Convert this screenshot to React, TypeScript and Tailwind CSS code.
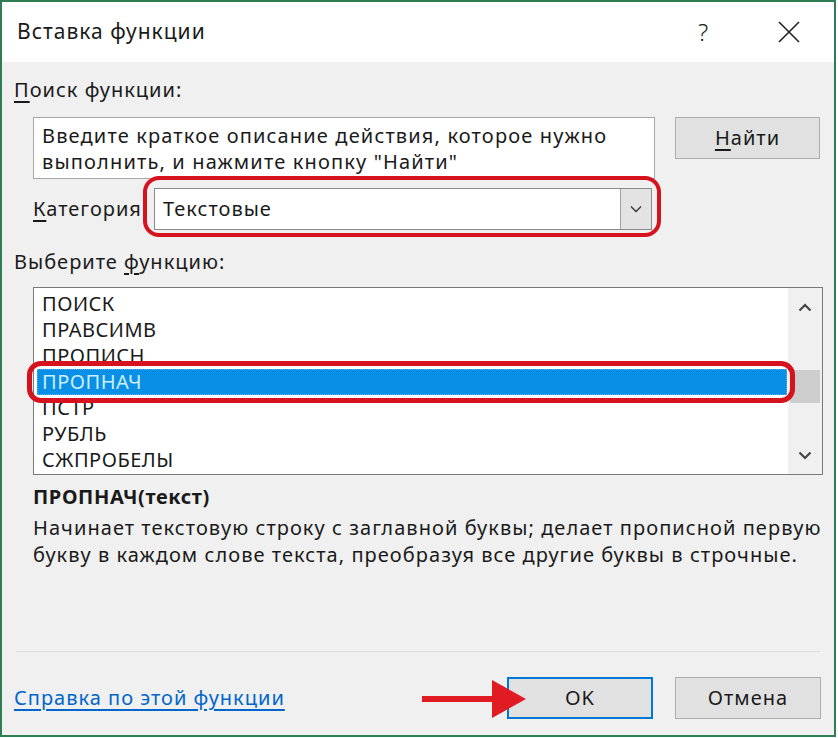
import React from "react";

const font = { fontFamily: '"Noto Sans", "Open Sans", Arial, sans-serif' };

const items = ["ПОИСК", "ПРАВСИМВ", "ПРОПИСН", "ПРОПНАЧ", "ПСТР", "РУБЛЬ", "СЖПРОБЕЛЫ"];

export default function App() {
  return (
    <div className="w-[838px] h-[738px] bg-white text-[#1a1a1a]" style={font}>
      <div className="relative w-[836px] h-[737px] border-2 border-[#2f7d55] flex flex-col">
        {/* Title bar */}
        <div className="h-[60px] bg-white flex items-center pl-[15px] shrink-0">
          <div className="text-[21px] tracking-[1px] flex-1">Вставка функции</div>
          <div className="text-[24px] font-light w-[30px] text-center mr-[60px] text-[#222]">?</div>
          <svg width="22" height="22" viewBox="0 0 22 22" className="mr-[34px]">
            <path d="M1 1 L21 21 M21 1 L1 21" stroke="#222" strokeWidth="1.6" />
          </svg>
        </div>
        {/* Body */}
        <div className="flex-1 bg-[#f0f0f0] flex flex-col pl-[12px] pr-[12px] text-[20px] tracking-[1px]">
          <div className="mt-[15px] h-[26px] leading-[26px]">
            <span className="underline underline-offset-[4px]">П</span>оиск функции:
          </div>
          <div className="mt-[14px] flex ml-[19px]">
            <div className="w-[622px] h-[62px] bg-white border border-[#a8a8a8] pl-[8px] pt-[5px] leading-[26px] tracking-[1.15px]">
              Введите краткое описание действия, которое нужно
              <br />
              выполнить, и нажмите кнопку "Найти"
            </div>
            <div className="ml-[20px] w-[145px] h-[42px] bg-[#e1e1e1] border border-[#adadad] flex items-center justify-center">
              <span>
                <span className="underline underline-offset-[4px]">Н</span>айти
              </span>
            </div>
          </div>
          <div className="mt-[9px] flex items-center ml-[19px] h-[42px]">
            <div className="w-[121px]">
              <span className="underline underline-offset-[4px]">К</span>атегория
            </div>
            <div className="w-[498px] h-[42px] bg-white border border-[#8a8a8a] flex items-center">
              <div className="flex-1 pl-[8px]">Текстовые</div>
              <div className="w-[31px] h-full bg-[#e3e3e3] border-l border-[#a0a0a0] flex items-center justify-center">
                <svg width="12" height="8" viewBox="0 0 12 8">
                  <path d="M1 1.5 L6 6.5 L11 1.5" fill="none" stroke="#333" strokeWidth="1.3" />
                </svg>
              </div>
            </div>
          </div>
          <div className="mt-[19px] h-[26px] leading-[26px]">
            Выберите <span className="underline underline-offset-[4px]">ф</span>ункцию:
          </div>
          <div className="mt-[12px] ml-[19px] w-[790px] h-[188px] bg-white border border-[#7a7a7a] flex">
            <div className="flex-1 pt-[3px] pl-[3px] pr-[1px] tracking-[0.5px]">
              {items.map((it) => (
                <div
                  key={it}
                  className={
                    it === "ПРОПНАЧ"
                      ? "h-[26px] leading-[24px] pl-[4px] bg-[#0a8fe6] text-[#cdeeff] border border-dotted border-[#5fb0ee]"
                      : "h-[26px] leading-[26px] pl-[5px]"
                  }
                >
                  {it}
                </div>
              ))}
            </div>
            <div className="w-[34px] bg-[#f0f0f0] flex flex-col items-center">
              <div className="h-[38px] w-full flex items-center justify-center">
                <svg width="14" height="9" viewBox="0 0 14 9">
                  <path d="M1.5 7.5 L7 2 L12.5 7.5" fill="none" stroke="#444" strokeWidth="2.2" />
                </svg>
              </div>
              <div className="mt-[44px] h-[33px] w-[30px] bg-[#cdcdcd]" />
              <div className="flex-1" />
              <div className="h-[38px] w-full flex items-center justify-center">
                <svg width="14" height="9" viewBox="0 0 14 9">
                  <path d="M1.5 1.5 L7 7 L12.5 1.5" fill="none" stroke="#444" strokeWidth="2.2" />
                </svg>
              </div>
            </div>
          </div>
          <div className="mt-[9px] ml-[19px] h-[26px] leading-[26px] text-[20px] tracking-[0.6px] font-bold">ПРОПНАЧ(текст)</div>
          <div className="mt-[4px] ml-[19px] leading-[27px] whitespace-nowrap tracking-[1.05px]">
            Начинает текстовую строку с заглавной буквы; делает прописной первую
            <br />
            букву в каждом слове текста, преобразуя все другие буквы в строчные.
          </div>
          <div className="mt-[83px] h-px bg-[#dcdcdc] ml-[2px] mr-[2px]" />
          <div className="mt-[25px] flex items-center h-[42px]">
            <div className="text-[#0066cc] underline underline-offset-[4px] w-[493px]">
              Справка по этой функции
            </div>
            <div className="w-[146px] h-[42px] bg-[#e1e1e1] border-2 border-[#0078d7] flex items-center justify-center">
              OK
            </div>
            <div className="ml-[22px] w-[146px] h-[42px] bg-[#e1e1e1] border border-[#adadad] flex items-center justify-center">
              Отмена
            </div>
          </div>
        </div>
        {/* Annotations */}
        <div className="absolute left-[141px] top-[174px] w-[518px] h-[61px] border-4 border-[#d5121e] rounded-[16px]" />
        <div className="absolute left-[25px] top-[359px] w-[768px] h-[42px] border-[5px] border-[#d5121e] rounded-[14px]" />
        <svg className="absolute left-[418px] top-[676px]" width="112" height="42" viewBox="0 0 112 42">
          <rect x="2" y="18" width="74" height="6" fill="#e01b24" />
          <path d="M72 2 L106 21 L72 40 Z" fill="#e01b24" />
        </svg>
      </div>
    </div>
  );
}
